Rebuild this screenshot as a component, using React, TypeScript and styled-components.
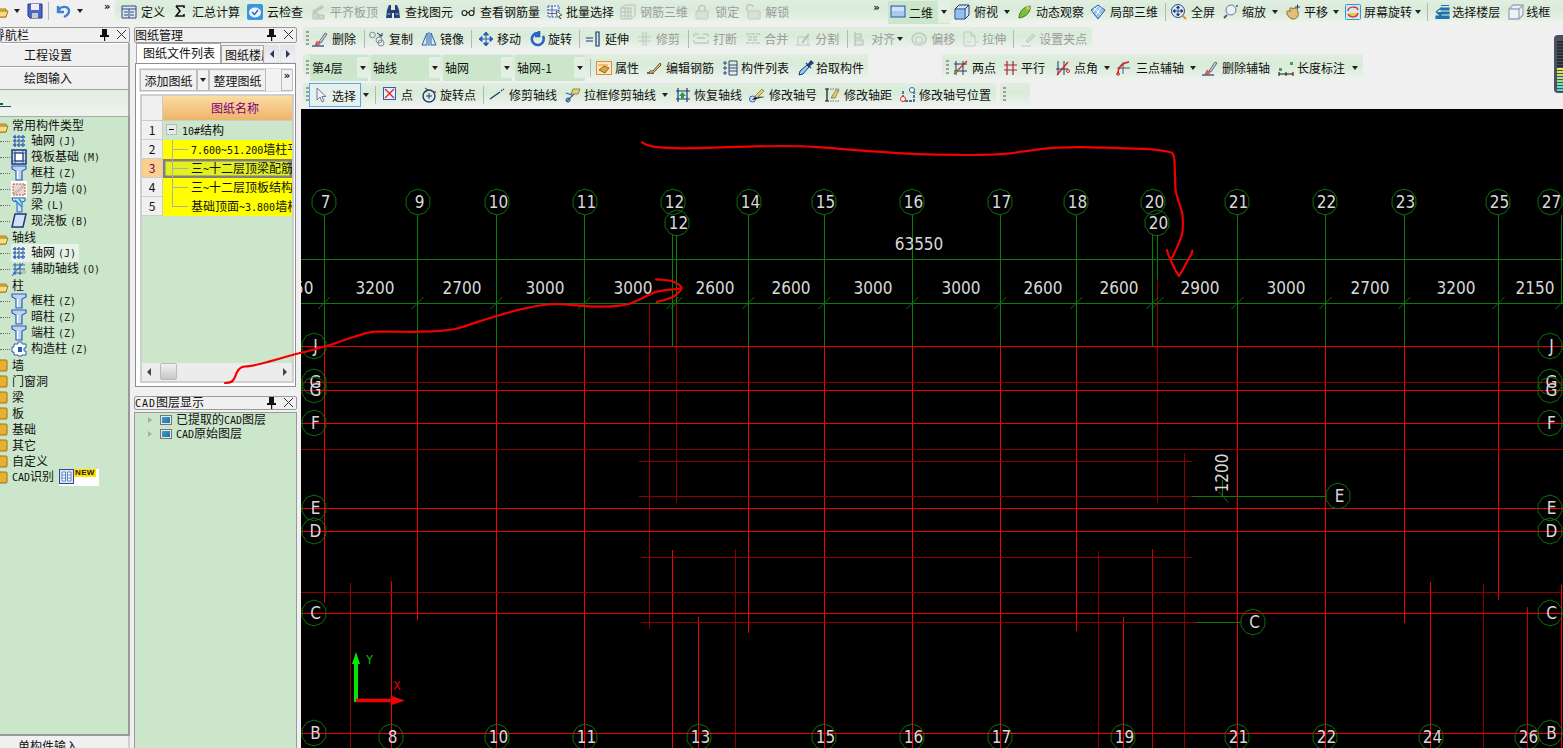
import React from 'react';
import styled, { createGlobalStyle, css } from 'styled-components';

const Global = createGlobalStyle`
  html, body { margin: 0; padding: 0; background: #f0f0f0; overflow: hidden; }
  body { font: 12px "Noto Sans CJK SC", "Liberation Sans", sans-serif; color: #111; }
`;
const Page = styled.div`position: relative; width: 1563px; height: 748px; overflow: hidden; background: #f0f0f0;`;
const band = css`background: linear-gradient(#e0eee0, #d9ebd9 40%, #eff3ef);`;

/* ---------- toolbars ---------- */
const TopRow = styled.div`display: flex; height: 24px;`;
const LeftTools = styled.div`display: flex; align-items: center; width: 115px; height: 22px; overflow: visible; flex: none;`;
const Band = styled.div<{ $w?: number; $ml?: number; $grow?: boolean }>`
  ${band}
  display: flex; align-items: center; flex: ${p => (p.$grow ? '1' : 'none')};
  width: ${p => (p.$w ? `${p.$w}px` : 'auto')};
  margin-left: ${p => p.$ml ?? 0}px; border-radius: 2px; white-space: nowrap;
`;
const ToolEl = styled.div<{ $ml: number; $off?: boolean; $g: number }>`
  display: flex; align-items: center; gap: ${p => p.$g}px; margin-left: ${p => p.$ml}px; flex: none;
  color: ${p => (p.$off ? '#9b9b9b' : '#111')}; line-height: 16px;
  ${p => p.$off && 'svg { opacity: .55; filter: grayscale(1); }'}
`;
const Sel2D = styled.div`display: flex; align-items: center; gap: 4px; height: 23px; margin-left: 3px; padding: 0 5px 0 3px; background: #cbe6cb;`;
const CaretBox = styled.div`display: flex; align-items: center; justify-content: center; width: 12px; height: 23px; background: #e3f0e3; border-bottom: 1px solid #cfe3cf;`;
const SelBox = styled.div`display: flex; align-items: center; gap: 6px; height: 22px; box-sizing: content-box; padding: 0 0 0 6px; width: 44px; border: 1px solid #58a7e6; background: #e6f1ee;`;
const Caret = styled.i<{ $ml?: number }>`
  display: block; flex: none; width: 0; height: 0; margin-left: ${p => p.$ml ?? 0}px;
  border-left: 3.5px solid transparent; border-right: 3.5px solid transparent; border-top: 4px solid #222;
`;
const Sep = styled.i<{ $ml: number }>`display: block; flex: none; width: 1px; height: 18px; background: #b4b8b4; margin-left: ${p => p.$ml}px;`;
const Dots = styled.i<{ $ml: number }>`display: block; flex: none; width: 3px; height: 16px; margin-left: ${p => p.$ml}px;
  background: repeating-linear-gradient(#9aa09a 0 2px, transparent 2px 4px);`;
const More = styled.b<{ $ml?: number }>`display: block; flex: none; font: bold 10px/10px "DejaVu Sans", sans-serif; margin: -8px 0 0 ${p => p.$ml ?? 0}px; color: #111;`;
const Combo = styled.div<{ $w: number; $ml: number }>`
  display: flex; align-items: center; justify-content: space-between; box-sizing: border-box; flex: none;
  width: ${p => p.$w}px; height: 26px; margin-left: ${p => p.$ml}px; padding-left: 2px; background: #cbe6cb;
`;
const ComboArrow = styled.div`display: flex; align-items: center; justify-content: center; width: 11px; height: 21px; background: #e2efe2;`;

const Main = styled.div`display: flex; height: 724px; padding-top: 3px;`;
const Workspace = styled.div`flex: none; width: 1262px; margin-left: 4px; display: flex; flex-direction: column;`;
const ToolRow = styled.div<{ $h: number; $mb: number }>`display: flex; height: ${p => p.$h}px; margin: 0 0 ${p => p.$mb}px 2px;`;
const Canvas = styled.svg`display: block; width: 1262px; height: 639px; background: #000; flex: none;
  text { font-family: "DejaVu Sans Condensed", "DejaVu Sans", sans-serif; fill: #d8d8d8; }
  line { shape-rendering: crispEdges; }`;
const Overlay = styled.svg`position: absolute; left: 0; top: 0; width: 1563px; height: 748px; pointer-events: none;`;
const Meter = styled.div`
  position: absolute; top: 35px; right: 0; width: 9px; height: 58px; box-sizing: border-box; padding: 6px 0 0 3px;
  border-radius: 4px 0 0 4px; background: #4b515f; display: flex; flex-direction: column; gap: 1px;
`;
const MeterTick = styled.i<{ $c: string }>`display: block; height: 2px; width: 6px; background: ${p => p.$c};`;

/* ---------- panels ---------- */
const Nav = styled.div`flex: none; width: 130px; display: flex; flex-direction: column;`;
const Side = styled.div`flex: none; width: 163px; margin-left: 4px; display: flex; flex-direction: column;`;
const TitleBar = styled.div`
  display: flex; align-items: center; height: 14px; box-sizing: content-box; flex: none;
  border: 1px solid #9a9a9a; border-radius: 2px; background: #f0f0f0; overflow: hidden; white-space: nowrap; line-height: 14px;
`;
const TitleText = styled.span<{ $ml?: number }>`flex: 1; margin-left: ${p => p.$ml ?? 0}px;`;
const PinBox = styled.span`display: flex; align-items: center; justify-content: center; width: 17px; height: 14px;`;
const NavBtn = styled.div<{ $h: number }>`
  height: ${p => p.$h}px; line-height: ${p => p.$h}px; text-align: center; border-bottom: 1px solid #a0a0a0; border-right: 2px solid #a8a8a8; flex: none;
  background: #f0f0f0; padding-right: 32px; box-shadow: inset 0 1px #fff;
`;
const NavStrip = styled.div`height: 26px; flex: none; background: linear-gradient(#e2efe2, #eef2ee); display: flex; align-items: flex-end; padding-bottom: 7px; box-sizing: border-box; border-right: 2px solid #a8a8a8;`;
const Tree = styled.div`
  flex: none; height: 620px; box-sizing: border-box; background: #cce6cc;
  border-right: 2px solid #9a9a9a; border-bottom: 2px solid #9a9a9a; border-top: 1px solid #9fb09f;
  overflow: hidden;
`;
const Row = styled.div`display: flex; align-items: center; height: 16px; white-space: nowrap; line-height: 16px;`;
const Conn = styled.i`display: block; flex: none; width: 10px; margin-right: 1px; border-top: 1px dotted #6b6b6b;`;
const Child = styled.div<{ $on?: boolean }>`
  display: flex; align-items: center; gap: 5px; padding-right: 3px; border-radius: 2px;
  background: ${p => (p.$on ? '#e6f2e6' : 'transparent')};
`;
const Folder = styled.span`display: block; width: 16px; height: 14px; margin: 0 4px 0 -8px; flex: none;`;
const Hot = styled.span`font: 10px/16px "DejaVu Sans Mono", monospace; margin-left: 3px; color: #222;`;
const Mono = styled.span`font: 10px/16px "DejaVu Sans Mono", monospace;`;
const TitleMono = styled.span`font: 10px/12px "DejaVu Sans Mono", monospace; letter-spacing: 1px;`;
const NewBox = styled.span`display: flex; align-items: flex-start; width: 40px; height: 17px; margin-left: 5px; background: #fff;`;
const NewTag = styled.b`font: bold 8px/8px "Liberation Sans", sans-serif; background: #ffe000; padding: 0 1px; color: #222; letter-spacing: .3px;`;
const NavFoot = styled.div`flex: 1; background: #f0f0f0; padding: 2px 0 0 18px; line-height: 16px; border-right: 2px solid #d0d0d0;`;

const Tabs = styled.div`display: flex; align-items: flex-end; height: 20px; flex: none;`;
const Tab = styled.div<{ $on?: boolean; $w: number }>`
  width: ${p => p.$w}px; box-sizing: border-box; height: ${p => (p.$on ? 20 : 18)}px; line-height: 18px; overflow: hidden; white-space: nowrap;
  margin-left: ${p => (p.$on ? 2 : 0)}px; padding-left: ${p => (p.$on ? 6 : 3)}px; background: ${p => (p.$on ? '#fff' : '#f0f0f0')};
  border: 1px solid #a8a8a8; border-bottom: 0; flex: none;
`;
const TabArrow = styled.div<{ $ml: number }>`
  display: flex; align-items: center; justify-content: center; width: 15px; height: 18px; flex: none; margin-left: ${p => p.$ml}px;
  background: linear-gradient(#dfe3ee, #f2f2f6); border: 1px solid #e4e4e4; box-sizing: border-box;
`;
const Frame = styled.div`flex: none; height: 324px; box-sizing: border-box; margin: 0 1px 0 1px; border: 1px solid #8e8e8e; background: #fff; padding: 4px 3px 3px 3px;`;
const FrameBar = styled.div`display: flex; height: 24px; background: #f2f2f2; border: 1px solid #ddd; box-sizing: border-box;`;
const FrameBtn = styled.div<{ $w: number; $ml?: number }>`
  flex: none; width: ${p => p.$w}px; margin-left: ${p => p.$ml ?? 0}px; box-sizing: border-box; height: 22px; line-height: 21px;
  text-align: center; border: 1px solid #bdbdbd; background: #f1f1f1;
  display: flex; align-items: center; justify-content: center;
`;
const GridBox = styled.div`margin: 2px 0 0 1px; height: 289px; border: 2px solid #cfcfcf; background: #cce6cc; display: flex; flex-direction: column; box-sizing: border-box; overflow: hidden; width: 154px;`;
const GridRow = styled.div<{ $h: number }>`display: flex; height: ${p => p.$h}px; flex: none;`;
const NumCell = styled.div<{ $on?: boolean }>`
  flex: none; width: 21px; box-sizing: border-box; text-align: center; line-height: 18px;
  border-right: 1px solid #ccc; border-bottom: 1px solid #ccc;
  background: ${p => (p.$on ? '#fbd08c' : '#f0f0f0')}; color: ${p => (p.$on ? '#700070' : '#111')};
`;
const HeadCell = styled.div`flex: 1; text-align: center; padding-left: 15px; line-height: 24px; color: #800080; background: linear-gradient(#fbdca4, #efb468); border-bottom: 1px solid #ccc;`;
const NameCell = styled.div<{ $bg: string; $on?: boolean }>`
  position: relative; flex: 1; min-width: 0; overflow: hidden; white-space: nowrap; line-height: 17px;
  padding-left: ${p => (p.$bg === 'none' ? 19 : 28)}px; background: ${p => (p.$bg === 'none' ? 'transparent' : p.$bg)};
  ${p => p.$on && 'box-shadow: inset 0 0 0 2.5px #808080;'}
`;
const Branch = styled.i<{ $last?: boolean }>`
  position: absolute; left: 9px; top: 0; width: 16px; height: ${p => (p.$last ? 10 : 19)}px; box-sizing: border-box;
  border-left: 1px solid #b0b0a0; background: linear-gradient(#b0b0a0, #b0b0a0) no-repeat 0 9px / 100% 1px;
`;
const Minus = styled.i`
  position: absolute; left: 3px; top: 3px; width: 11px; height: 11px; box-sizing: border-box; background: #e8e8e8; border: 1px solid #bbb;
  &::after { content: ''; position: absolute; left: 2px; top: 4px; width: 5px; height: 1px; background: #111; }
`;
const GridFill = styled.div`flex: 1;`;
const HScroll = styled.div`height: 18px; flex: none; background: #ececec; display: flex; align-items: center; justify-content: space-between; padding: 0 5px; box-sizing: border-box; position: relative;`;
const Thumb = styled.i`position: absolute; left: 18px; top: 0; width: 15px; height: 15px; border: 1px solid #bbb; border-radius: 2px; background: linear-gradient(#f2f2f2, #c6c6c6);`;
const Tri = styled.i<{ $dir: 'l' | 'r'; $c?: string }>`
  display: block; width: 0; height: 0; border-top: 4px solid transparent; border-bottom: 4px solid transparent;
  ${p => (p.$dir === 'l' ? `border-right: 4px solid ${p.$c ?? '#444'};` : `border-left: 4px solid ${p.$c ?? '#444'};`)}
`;
const CadTitle = styled(TitleBar)`margin-top: 9px; height: 12px; line-height: 12px;`;
const CadTree = styled.div`flex: 1; margin-top: 2px; background: #cce6cc; border: 1px solid #9a9a9a; border-bottom: 0;`;
const CadRow = styled.div`display: flex; align-items: center; height: 14px; padding-left: 13px; white-space: nowrap; line-height: 14px;`;
const CadTri = styled.i`display: block; width: 0; height: 0; border-top: 3px solid transparent; border-bottom: 3px solid transparent; border-left: 4px solid #aaa; margin-right: 8px;`;
const LayerIcon = styled.i`display: block; width: 12px; height: 10px; box-sizing: border-box; border: 1px solid #777; background: linear-gradient(135deg, #4aa3d8, #1b6a98); box-shadow: inset 0 0 0 1px #dfeaf0; margin-right: 4px;`;

/* ---------- icons ---------- */
const B = '#2a5fb4', D = '#1d3a70', R = '#d22', O = '#e0902a';
const grid = <path d="M2 4H14M2 8H14M2 12H14M4 2V14M8 2V14M12 2V14" stroke={B} fill="none" strokeWidth="1.3" strokeDasharray="3 .6" />;
const column = <><path d="M1 1H15V4L11 6V15H5V6L1 4Z" fill="#bcd4f2" stroke={B} strokeWidth="1.2" /><path d="M6.5 6V14" stroke="#fff" strokeWidth="1.4" /></>;
const brush = <><path d="M7 11L13 2L15 3L9 12Z" fill="#c5c8d8" stroke="#445" strokeWidth=".7" /><path d="M5 10L8 12L7 14L3 14Z" fill="#e86a50" stroke="#a33" strokeWidth=".5" /><path d="M0 15H12" stroke={D} strokeWidth="1.2" /></>;
const icons: Record<string, React.ReactNode> = {
  openfolder: <><path d="M1 4H6L7 6H14V14H1Z" fill="#f0c850" stroke="#a07818" /><path d="M3 8H16L14 14H1Z" fill="#f8dd80" stroke="#a07818" /></>,
  save: <><path d="M1 1H15V15H3L1 13Z" fill="#4a68c8" stroke="#22357a" /><path d="M4 1H12V7H4Z" fill="#eef" /><path d="M5 10H11V15H5Z" fill="#c8c8d0" /></>,
  undo: <path d="M3 8C3 3 13 2 13 8C13 11 10 13 8 14M2 3V9H8" fill="none" stroke="#3f7fd6" strokeWidth="2.4" />,
  define: <><path d="M1 2H15V14H1Z" fill="#dfe8f4" stroke="#2b4a78" /><path d="M1 5H15M3 8H7M3 11H7M9 8H13M9 11H13M8 5V14" stroke="#2b4a78" /></>,
  sigma: <path d="M2 2H10V4M2 2L6 7L2 12H10V10" fill="none" stroke="#111" strokeWidth="1.6" />,
  cloud: <><rect x="0" y="0" width="16" height="16" rx="2" fill="#3a96dc" /><ellipse cx="8" cy="8.5" rx="6" ry="5" fill="#eaf4ff" /><path d="M5 8L7.5 10.5L11 6" stroke={B} fill="none" strokeWidth="1.4" /></>,
  flat: <><path d="M2 7L12 1L14 4L4 9Z" fill="#aaa" /><path d="M3 9H8V15H3ZM9 11H14V15H9Z" fill="#c4c4c4" stroke="#999" /></>,
  binoc: <><path d="M2 6L4 1H6V6H10V1H12L14 6L15 14H9V9H7V14H1Z" fill="#25407a" /><path d="M2.5 10H5.5M10.5 10H13.5" stroke="#9cc" /></>,
  glasses: <><circle cx="3.5" cy="9" r="2.5" fill="none" stroke="#222" strokeWidth="1.2" /><circle cx="10.5" cy="9" r="2.5" fill="none" stroke="#222" strokeWidth="1.2" /><path d="M6 8.5H8M13 8L13 3" stroke="#222" /></>,
  batch: <><path d="M1 2H12V13H1Z" fill="#eef3fb" stroke={B} strokeDasharray="2 1" /><path d="M1 6H12M1 9.5H12M5 2V13" stroke={D} strokeWidth=".7" /><path d="M9 7L15 11L12 12L14 15L10 12Z" fill="#fff" stroke="#222" strokeWidth=".7" /></>,
  rebar3d: <path d="M1 4H11V15H1ZM1 4L5 1H15V12L11 15M1 8H11M1 12H11M5 4V15M8 4V15" fill="none" stroke="#999" />,
  lock: <><path d="M4 7V4C4 0.5 10 0.5 10 4V7" fill="none" stroke="#aaa" strokeWidth="1.5" /><rect x="1" y="7" width="12" height="8" rx="1" fill="#d5d5d5" stroke="#aaa" /></>,
  unlock: <><path d="M2 7V3C2 0 8 0 8 3" fill="none" stroke="#aaa" strokeWidth="1.5" /><rect x="3" y="7" width="12" height="8" rx="1" fill="#d5d5d5" stroke="#aaa" /></>,
  view2d: <><rect x="0" y="2" width="14" height="11" fill="#a9c8f0" stroke="#2d5aa8" /><rect x="1" y="3" width="12" height="4" fill="#cfe2fa" /></>,
  top: <><path d="M1 5L5 1H15V11L11 15H1Z" fill="#cfe6f8" stroke={D} /><path d="M1 5H11V15M11 5L15 1" fill="none" stroke={D} /><path d="M2 6H10V14H2Z" fill="#8fc3ee" /></>,
  orbit: <><path d="M2 14C2 8 6 3 13 2C14 7 10 13 2 14Z" fill="#7cc040" stroke="#3c7a20" /><circle cx="11" cy="4" r="2" fill="#e8c040" /></>,
  local3d: <><path d="M1 6L8 1L15 6L8 15Z" fill="#9cc4ea" stroke={B} /><path d="M4 4L11 11M8 2L3 8M11 3L6 11" stroke="#fff" /></>,
  full: <><circle cx="7" cy="7" r="6.5" fill="#dbe6f8" stroke="#2b4a88" /><path d="M7 2V12M2 7H12M7 2L5.5 4H8.5ZM7 12L5.5 10H8.5ZM2 7L4 5.5V8.5ZM12 7L10 5.5V8.5Z" stroke={D} fill={D} strokeWidth=".8" /><path d="M11 11L15 15" stroke={O} strokeWidth="2" /></>,
  zoom: <><circle cx="8" cy="6" r="5" fill="#e8f0f8" stroke="#778" /><path d="M4 11L1 14" stroke="#556" strokeWidth="2" /><path d="M13 2H15M14 1V3" stroke={B} /></>,
  pan: <><path d="M2 10C1 6 4 6 5 8L5 5C5 3 7 3 7 5L9 4C11 4 13 6 13 8C14 12 12 15 8 15C5 15 4 13 2 10Z" fill="#e0c078" stroke="#8a6a28" /><path d="M10 3H15M12.5 0.500V5" stroke={D} /></>,
  rotate: <><rect x=".5" y=".5" width="15" height="15" rx="1" fill="#cfe9f8" stroke="#3a96c8" /><path d="M4 9H12V13H4Z" fill="#e8d040" /><path d="M3 7C3 2 12 2 13 6M13 9C12 14 5 14 3 10" fill="none" stroke="#e03a2a" strokeWidth="1.5" /></>,
  floors: <path d="M2 8L7 4V6H15V4H7M2 8L7 12V10H15V8H7M2 12H15V14.500H2ZM7 1.500H15" fill="#1e72b0" stroke="#1e72b0" strokeWidth="1.2" />,
  wire: <path d="M1 5H11V15H1ZM1 5L5 1H15V11L11 15M11 5L15 1" fill="#eef2f8" stroke="#9aa8b8" strokeWidth="1.3" />,
  brush,
  copy: <><circle cx="3.5" cy="4" r="2.800" fill="none" stroke="#889" /><circle cx="10" cy="9" r="3" fill="none" stroke="#889" /><circle cx="12" cy="12" r="3" fill="none" stroke="#889" /><path d="M8 2L13 5M13 2V5H10" stroke={D} fill="none" /></>,
  mirror: <path d="M6 2L1 14H6ZM10 2L15 14H10ZM8 1V15" fill="#dce8f8" stroke={B} />,
  move: <path d="M8 1V15M1 8H15M8 1L5.500 4H10.500ZM8 15L5.500 12H10.500ZM1 8L4 5.500V10.500ZM15 8L12 5.500V10.500Z" fill={B} stroke={B} />,
  spin: <path d="M8 2A6 6 0 1 0 13 5M9 0V5H5" fill="none" stroke="#2a62c4" strokeWidth="2.6" />,
  extend: <path d="M1 7H8M1 10H8M11 1H14V15H11Z" fill="none" stroke={D} strokeWidth="1.2" />,
  trim: <path d="M1 6H14M1 10H14M6 1V15M9 1V15" fill="none" stroke="#aaa" strokeWidth="1.200" />,
  breakk: <path d="M1 3H6M10 3H15M1 12H15V9M1 12V9M1 3V6M15 3V6M4 7H12" fill="none" stroke="#aaa" strokeWidth="1.300" />,
  merge: <path d="M1 3H15M1 12H15M3 6H13M3 9H13" fill="none" stroke="#aaa" strokeWidth="1.300" strokeDasharray="4 1" />,
  split: <><path d="M1 14H15M3 6H13V14M3 6V14" fill="none" stroke="#aaa" /><path d="M7 12L14 3" stroke="#999" strokeWidth="2" /></>,
  align: <path d="M2 1V15M2 3H8V7H2ZM2 9H10V14H2Z" fill="#d8d8d8" stroke="#999" strokeWidth="1.200" />,
  offset: <><ellipse cx="8" cy="8" rx="7" ry="6" fill="none" stroke="#aaa" strokeWidth="1.500" /><ellipse cx="8" cy="9" rx="3.500" ry="3" fill="none" stroke="#aaa" strokeWidth="1.200" /></>,
  stretch: <path d="M1 1H8L12 5V15H1ZM8 1V5H12M13 11H16M4 11H8" fill="none" stroke="#aaa" />,
  grip: <><path d="M1 15H11" stroke="#aaa" /><path d="M6 10L13 3L15 5L8 12Z" fill="#ccc" stroke="#aaa" /></>,
  prop: <><rect x=".5" y="1.500" width="15" height="13" fill="#fbe7c4" stroke={O} /><path d="M3 10L8 6L13 8L9 13Z" fill="#d8a840" stroke="#8a6a18" /><path d="M2 5H12" stroke={O} /></>,
  editbar: <><path d="M1 13H8" stroke="#111" strokeWidth="1.200" /><path d="M3 13C4 10 5 11 7 11L14 3L15 5L8 12" fill="#f0c860" stroke="#443" strokeWidth=".9" /></>,
  list: <path d="M1 2H3V4H1ZM1 7H3V9H1ZM1 12H3V14H1ZM6 1H14V15H6ZM6 5H14M6 8H14M6 11H14" fill="none" stroke={D} strokeWidth=".9" />,
  pick: <><path d="M1 15L2 11L9 5L11 7L5 14Z" fill="#8ecbff" stroke={D} /><path d="M8 3L13 8M10 5L13 1L15 3L11 6" fill={B} stroke={D} strokeWidth="1.300" /></>,
  twopt: <><path d="M3 1V15M10 1V15M1 4H14M1 11H14" stroke={D} strokeWidth="1" fill="none" /><path d="M1 14L14 1" stroke={R} strokeWidth="1.200" /><circle cx="3" cy="12" r="1.500" fill="#3aaa3a" /></>,
  parallel: <path d="M4 1V15M10 1V15M1 5H14M1 10H14" stroke="#b02038" strokeWidth="1.200" fill="none" />,
  angle: <><path d="M3 1V15M9 1V15M1 9H13" stroke={D} fill="none" /><path d="M2 15L13 2" stroke={R} strokeWidth="1.400" /><circle cx="13" cy="11" r="1.500" fill="none" stroke={R} /></>,
  arc3: <><path d="M2 14C2 7 6 3 13 2M1 8H14M7 2V14" fill="none" stroke={D} strokeWidth=".8" /><path d="M2 14C2 7 6 3 13 2" fill="none" stroke={R} strokeWidth="1.400" /><circle cx="2" cy="14" r="1.400" fill="none" stroke={R} /></>,
  dim: <><rect x="1" y="8" width="3" height="3" fill="#3aaa3a" /><rect x="12" y="2" width="3" height="3" fill="#3aaa3a" /><path d="M1 12V16M8 12V16M15 12V16M1 14H15" stroke="#111" /></>,
  cursor: <path d="M1 1V13L4 10L6 15L8 14L6 9.500H10Z" fill="#eef" stroke="#778" />,
  point: <><rect x=".5" y=".5" width="12" height="12" fill="#e8f0ff" stroke={B} /><path d="M2 2L11 11M11 2L2 11" stroke={R} strokeWidth="1.300" /></>,
  spinpt: <><circle cx="8" cy="9" r="6" fill="none" stroke={D} strokeWidth="1.400" /><path d="M5 9H11M8 6V12" stroke={D} /><path d="M4 1L7 3L4 5" fill="none" stroke={D} /><circle cx="14" cy="5" r="1" fill={R} /></>,
  trimaxis: <><path d="M0 12L10 5" stroke={D} strokeWidth="1.400" /><path d="M11 4L14 2" stroke={D} strokeDasharray="1.500 1" strokeWidth="1.400" /></>,
  frame: <><path d="M2 14L13 3M1 6L7 8" stroke={B} strokeWidth="1.300" /><path d="M8 2L15 2L13 7L6 7Z" fill="#f0cc60" stroke="#886" /><circle cx="3" cy="13" r="2" fill="none" stroke={D} /></>,
  restore: <><path d="M3 1V15M12 1V15M1 4H15M1 12H15" stroke={D} strokeWidth="1.200" /><path d="M7.500 5L11 9H9V12H6V9H4Z" fill="#2a9a50" /></>,
  axno: <><circle cx="3.500" cy="12" r="3" fill="#cfe0f8" stroke={B} /><path d="M3 13L6 10H15" stroke="#778" /><path d="M6 9L13 2L15 4L8 11Z" fill="#f0cc60" stroke="#664" strokeWidth=".7" /></>,
  axdist: <><path d="M1 2H5M3 2V14M1 14H5" stroke="#111" strokeWidth="1.200" /><path d="M7 11L12 3H15L11 11Z" fill="#f0cc60" stroke="#664" strokeWidth=".7" /><path d="M6 14H15" stroke="#777" strokeDasharray="1.500 1" /><path d="M6 2H15" stroke="#777" strokeDasharray="1.500 1" /></>,
  axpos: <><path d="M3 4V14H14V4" fill="none" stroke={D} strokeWidth="1.300" strokeDasharray="3 1" /><circle cx="3" cy="12" r="2.500" fill="#fff" stroke={R} /><circle cx="12" cy="3" r="2.500" fill="#fff" stroke={B} /></>,
  grid,
  raft: <><rect x="1" y="1" width="14" height="14" fill="#cfe0f8" stroke={D} strokeWidth="1.500" /><rect x="4" y="4" width="8" height="8" fill="#fff" stroke={D} /><path d="M1 4H15M1 12H15M4 1V15M12 1V15" stroke={D} strokeWidth=".6" /></>,
  column,
  wall: <><rect x="0" y="0" width="16" height="16" fill="#fff" /><rect x="2" y="3" width="12" height="11" fill="#e8d8d0" stroke="#c05030" strokeDasharray="2 1" /><path d="M3 13L13 5" stroke="#b0a8a0" strokeWidth="3" strokeDasharray="1 1" /></>,
  beam: <><path d="M1 1H14V4L11 5V15H6V5L2 4Z" fill="#c8e4f8" stroke={B} /><path d="M4 3L11 10M8 2L11 6" stroke="#2a90d0" strokeWidth="1.600" /></>,
  slab: <path d="M4 1H15L12 14H1Z" fill="#cfe2fa" stroke={D} strokeWidth="1.500" />,
  auxgrid: <><path d="M2 4H14M2 8H14M2 12H14M4 2V14M9 2V14" stroke={B} strokeWidth="1" fill="none" /><path d="M1 15L12 2" stroke={B} /><path d="M11 9H15V13H11Z" fill="#b8c8a0" /></>,
  struct: <><path d="M3 3H7V1H11V3H15V7H13V10H15V14H11V15H7V14H3V11H1V6H3Z" fill="#fff" stroke={B} /><path d="M7 6H11V11H7Z" fill={B} /></>,
  pin: <path d="M5 2H10V8H12V10H8.200V14H7V10H3V8H5Z" fill="#111" />,
  close: <path d="M3 3L12 12M12 3L3 12" stroke="#333" strokeWidth="1" />,
  cols: <><rect x=".5" y=".5" width="14" height="14" fill="#dce8f8" stroke="#2b4a88" /><path d="M3 3H6.500V12H3ZM8.500 3H12V12H8.500ZM3 6H6.500M3 9H6.500M8.500 6H12M8.500 9H12" fill="#fff" stroke={B} strokeWidth=".7" /></>,
  closed: <rect x="0" y="2" width="15" height="11" rx="1" fill="#e8b030" stroke="#a07010" />,
};
const Svg = styled.svg<{ $w: number }>`display: block; flex: none; width: ${p => p.$w}px; height: 16px; overflow: visible;`;
const MiniSvg = styled.svg`display: block; width: 12px; height: 6px;`;
const Icon = ({ n, w = 16 }: { n: string; w?: number }) => <Svg $w={w} viewBox={`0 0 ${w} 16`}>{icons[n]}</Svg>;

type T = { n: string; t: string; ml: number; w?: number; g?: number; off?: boolean };
const Tool = ({ n, t, ml, w = 16, g = 4, off }: T) => (
  <ToolEl $ml={ml} $g={g} $off={off}><Icon n={n} w={w} /><span>{t}</span></ToolEl>
);

const Toolbars = () => (
  <TopRow>
    <LeftTools>
      <ToolEl $ml={-8} $g={0}><Icon n="openfolder" /></ToolEl>
      <Caret $ml={6} />
      <ToolEl $ml={7} $g={0}><Icon n="save" w={14} /></ToolEl>
      <Sep $ml={7} />
      <ToolEl $ml={7} $g={0}><Icon n="undo" w={14} /></ToolEl>
      <Caret $ml={7} />
      <More $ml={21}>»</More>
    </LeftTools>
    <Band $w={770}>
      <Tool n="define" t="定义" ml={6} />
      <Tool n="sigma" t="汇总计算" ml={9} w={12} g={6} />
      <Tool n="cloud" t="云检查" ml={7} />
      <Tool n="flat" t="平齐板顶" ml={7} off />
      <Tool n="binoc" t="查找图元" ml={7} />
      <Tool n="glasses" t="查看钢筋量" ml={8} w={14} g={5} />
      <Tool n="batch" t="批量选择" ml={7} g={3} />
      <Tool n="rebar3d" t="钢筋三维" ml={6} off />
      <Tool n="lock" t="锁定" ml={7} w={14} g={6} off />
      <Tool n="unlock" t="解锁" ml={6} off />
      <More $ml={84}>»</More>
    </Band>
    <Band $grow>
      <Sel2D><Icon n="view2d" w={14} /><span>二维</span></Sel2D>
      <CaretBox><Caret /></CaretBox>
      <Tool n="top" t="俯视" ml={4} />
      <Caret $ml={6} />
      <Tool n="orbit" t="动态观察" ml={7} w={14} g={5} />
      <Tool n="local3d" t="局部三维" ml={6} />
      <Sep $ml={7} />
      <Tool n="full" t="全屏" ml={5} />
      <Tool n="zoom" t="缩放" ml={8} g={3} />
      <Caret $ml={6} />
      <Tool n="pan" t="平移" ml={7} g={3} />
      <Caret $ml={5} />
      <Tool n="rotate" t="屏幕旋转" ml={6} g={3} />
      <Caret $ml={3} />
      <Sep $ml={6} />
      <Tool n="floors" t="选择楼层" ml={6} g={2} />
      <Tool n="wire" t="线框" ml={8} w={14} />
    </Band>
  </TopRow>
);

const WorkTools = () => (
  <>
    <ToolRow $h={23} $mb={4}>
      <Band $w={789}>
        <Dots $ml={3} />
        <Tool n="brush" t="删除" ml={3} w={17} g={3} />
        <Sep $ml={8} />
        <Tool n="copy" t="复制" ml={4} />
        <Tool n="mirror" t="镜像" ml={8} g={3} />
        <Sep $ml={7} />
        <Tool n="move" t="移动" ml={6} w={14} g={5} />
        <Tool n="spin" t="旋转" ml={9} w={14} />
        <Sep $ml={7} />
        <Tool n="extend" t="延伸" ml={5} w={15} g={5} />
        <Tool n="trim" t="修剪" ml={8} w={14} g={5} off />
        <Sep $ml={8} />
        <Tool n="breakk" t="打断" ml={4} w={15} g={5} off />
        <Tool n="merge" t="合并" ml={8} w={15} off />
        <Tool n="split" t="分割" ml={7} off />
        <Sep $ml={8} />
        <Tool n="align" t="对齐" ml={5} w={10} g={8} off />
        <Caret $ml={2} />
        <Tool n="offset" t="偏移" ml={8} w={14} g={6} off />
        <Tool n="stretch" t="拉伸" ml={8} w={14} g={5} off />
        <Sep $ml={7} />
        <Tool n="grip" t="设置夹点" ml={6} g={3} off />
      </Band>
    </ToolRow>
    <ToolRow $h={27} $mb={2}>
      <Band $w={565}>
        <Dots $ml={3} />
        <Combo $w={58} $ml={1}><span>第4层</span><ComboArrow><Caret /></ComboArrow></Combo>
        <Combo $w={69} $ml={3}><span>轴线</span><ComboArrow><Caret /></ComboArrow></Combo>
        <Combo $w={69} $ml={3}><span>轴网</span><ComboArrow><Caret /></ComboArrow></Combo>
        <Combo $w={70} $ml={3}><span>轴网-1</span><ComboArrow><Caret /></ComboArrow></Combo>
        <Sep $ml={5} />
        <Tool n="prop" t="属性" ml={5} w={15} />
        <Tool n="editbar" t="编辑钢筋" ml={7} w={15} g={5} />
        <Tool n="list" t="构件列表" ml={9} w={14} />
        <Tool n="pick" t="拾取构件" ml={9} w={14} />
      </Band>
      <Band $w={421} $ml={74}>
        <Dots $ml={4} />
        <Tool n="twopt" t="两点" ml={4} w={14} g={5} />
        <Tool n="parallel" t="平行" ml={7} w={14} />
        <Tool n="angle" t="点角" ml={10} w={14} g={5} />
        <Caret $ml={6} />
        <Tool n="arc3" t="三点辅轴" ml={6} w={15} g={5} />
        <Caret $ml={6} />
        <Tool n="brush" t="删除辅轴" ml={6} />
        <Tool n="dim" t="长度标注" ml={8} w={15} />
        <Caret $ml={7} />
      </Band>
    </ToolRow>
    <ToolRow $h={24} $mb={2}>
      <Band $w={693}>
        <Dots $ml={3} />
        <SelBox><Icon n="cursor" w={10} /><span>选择</span></SelBox>
        <Caret $ml={2} />
        <Sep $ml={6} />
        <Tool n="point" t="点" ml={7} w={13} g={5} />
        <Tool n="spinpt" t="旋转点" ml={8} w={15} />
        <Sep $ml={7} />
        <Tool n="trimaxis" t="修剪轴线" ml={6} w={14} g={5} />
        <Tool n="frame" t="拉框修剪轴线" ml={8} w={15} />
        <Caret $ml={6} />
        <Tool n="restore" t="恢复轴线" ml={7} w={14} g={5} />
        <Tool n="axno" t="修改轴号" ml={7} w={15} g={5} />
        <Tool n="axdist" t="修改轴距" ml={7} w={15} g={5} />
        <Tool n="axpos" t="修改轴号位置" ml={8} w={15} />
      </Band>
      <Band $w={30} $ml={4}><Dots $ml={3} /></Band>
    </ToolRow>
  </>
);

/* ---------- navigation data ---------- */
type N = { g?: string; c?: string; k?: string; i?: string; on?: boolean; open?: boolean };
const tree: N[] = [
  { g: '常用构件类型', open: true },
  { c: '轴网', k: 'J', i: 'grid' }, { c: '筏板基础', k: 'M', i: 'raft' }, { c: '框柱', k: 'Z', i: 'column' },
  { c: '剪力墙', k: 'Q', i: 'wall' }, { c: '梁', k: 'L', i: 'beam' }, { c: '现浇板', k: 'B', i: 'slab' },
  { g: '轴线', open: true },
  { c: '轴网', k: 'J', i: 'grid', on: true }, { c: '辅助轴线', k: 'O', i: 'auxgrid' },
  { g: '柱', open: true },
  { c: '框柱', k: 'Z', i: 'column' }, { c: '暗柱', k: 'Z', i: 'column' }, { c: '端柱', k: 'Z', i: 'column' }, { c: '构造柱', k: 'Z', i: 'struct' },
  { g: '墙' }, { g: '门窗洞' }, { g: '梁' }, { g: '板' }, { g: '基础' }, { g: '其它' }, { g: '自定义' },
];

const NavPanel = () => (
  <Nav>
    <TitleBar>
      <TitleText $ml={-32}>模块导航栏</TitleText>
      <PinBox><Icon n="pin" w={14} /></PinBox>
      <PinBox><Icon n="close" w={14} /></PinBox>
    </TitleBar>
    <NavBtn $h={23}>工程设置</NavBtn>
    <NavBtn $h={22}>绘图输入</NavBtn>
    <NavStrip><MiniSvg viewBox="0 0 12 6"><path d="M0 0H3V2H0ZM0 3H11V4H0Z" fill="#0f5a5a" /></MiniSvg></NavStrip>
    <Tree>
      {tree.map((r, i) => r.g ? (
        <Row key={i}><Folder><Icon n={r.open ? 'openfolder' : 'closed'} /></Folder><span>{r.g}</span></Row>
      ) : (
        <Row key={i}>
          <Conn />
          <Child $on={r.on}><Icon n={r.i!} w={15} /><span>{r.c}<Hot>({r.k})</Hot></span></Child>
        </Row>
      ))}
      <Row>
        <Folder><Icon n="closed" /></Folder>
        <span><Mono>CAD</Mono>识别</span>
        <NewBox><Icon n="cols" w={15} /><NewTag>NEW</NewTag></NewBox>
      </Row>
    </Tree>
    <NavFoot>单构件输入</NavFoot>
  </Nav>
);

const rows: { t: React.ReactNode; on?: boolean; last?: boolean }[] = [
  { t: <><Mono>7.600~51.200</Mono>墙柱平法</> },
  { t: <>三<Mono>~</Mono>十二层顶梁配筋</>, on: true },
  { t: <>三<Mono>~</Mono>十二层顶板结构</> },
  { t: <>基础顶面<Mono>~3.800</Mono>墙柱</>, last: true },
];

const SidePanel = () => (
  <Side>
    <TitleBar>
      <TitleText>图纸管理</TitleText>
      <PinBox><Icon n="pin" w={14} /></PinBox>
      <PinBox><Icon n="close" w={14} /></PinBox>
    </TitleBar>
    <Tabs>
      <Tab $on $w={85}>图纸文件列表</Tab>
      <Tab $w={43}>图纸楼层</Tab>
      <TabArrow $ml={0}><Tri $dir="l" $c="#335" /></TabArrow>
      <TabArrow $ml={1}><Tri $dir="r" $c="#335" /></TabArrow>
    </Tabs>
    <Frame>
      <FrameBar>
        <FrameBtn $w={57}>添加图纸</FrameBtn>
        <FrameBtn $w={12}><Caret /></FrameBtn>
        <FrameBtn $w={57}>整理图纸</FrameBtn>
        <FrameBtn $w={12} $ml={15}><More>»</More></FrameBtn>
      </FrameBar>
      <GridBox>
        <GridRow $h={25}><NumCell /><HeadCell>图纸名称</HeadCell></GridRow>
        <GridRow $h={19}>
          <NumCell>1</NumCell>
          <NameCell $bg="none"><Minus /><Mono>10#</Mono>结构</NameCell>
        </GridRow>
        {rows.map((r, i) => (
          <GridRow $h={19} key={i}>
            <NumCell $on={r.on}>{i + 2}</NumCell>
            <NameCell $bg={r.on ? '#e2f020' : '#ffff00'} $on={r.on}><Branch $last={r.last} />{r.t}</NameCell>
          </GridRow>
        ))}
        <GridFill />
        <HScroll><Tri $dir="l" /><Thumb /><Tri $dir="r" /></HScroll>
      </GridBox>
    </Frame>
    <CadTitle>
      <TitleText><TitleMono>CAD</TitleMono>图层显示</TitleText>
      <PinBox><Icon n="pin" w={14} /></PinBox>
      <PinBox><Icon n="close" w={14} /></PinBox>
    </CadTitle>
    <CadTree>
      <CadRow><CadTri /><LayerIcon /><span>已提取的<Mono>CAD</Mono>图层</span></CadRow>
      <CadRow><CadTri /><LayerIcon /><span><Mono>CAD</Mono>原始图层</span></CadRow>
    </CadTree>
  </Side>
);

/* ---------- CAD drawing (page coordinates, viewBox offset) ---------- */
const GR = '#0c7d0c', RD = '#f00000', DR = '#8c0000';
type L = [number, number, number, number, string];
const V = (x: number, a: number, b: number, c: string): L => [x, a, x, b, c];
const H = (y: number, a: number, b: number, c: string): L => [a, y, b, y, c];
const W = 1563, BTM = 748;
const axes: [number, number][] = [[324, 603], [417.5, 620], [496.5, BTM], [584.5, BTM], [748.5, 633], [824.5, BTM], [912.5, BTM], [1000.5, BTM], [1076.5, 631], [1237.5, BTM], [1325.5, BTM], [1404.5, 623], [1498.5, 600]];
const lines: L[] = [
  H(259.5, 301, W, GR), H(303.5, 301, W, GR),
  ...axes.flatMap(([x, e]): L[] => [V(x, 215, 346, GR), V(x, 346, e, RD)]),
  V(672.5, 235, 346, GR), V(676.5, 235, 303, GR), V(676.5, 303, 503, DR),
  V(1152.5, 235, 346, GR), V(1157.5, 235, 280, GR), V(1157.5, 280, 503, DR),
  V(1561.5, 215, 303, GR), V(1561.5, 585, BTM, RD),
  V(649.5, 302, 629, DR),
  V(350.5, 583, BTM, DR), V(391.5, 581, BTM, RD), V(672.5, 550, BTM, RD), V(698.5, 617, BTM, RD), V(735.5, 549, BTM, DR),
  V(1098.5, 552, BTM, DR), V(1123.5, 617, BTM, RD), V(1152.5, 549, BTM, '#c80000'), V(1184.5, 453, BTM, DR),
  V(1430.5, 582, BTM, RD), V(1483.5, 584, BTM, DR), V(1527.5, 607, BTM, '#c80000'),
  H(346.5, 301, W, RD), H(382.5, 301, W, DR), H(390.5, 301, W, RD), H(423.5, 301, W, RD),
  H(449.5, 301, W, DR), H(461.5, 639, 1192, DR), H(496.5, 639, 1192, DR), H(508.5, 301, W, RD), H(531.5, 301, W, RD),
  H(557.5, 641, 1192, DR), H(592.5, 301, W, DR), H(613.5, 301, W, RD), H(622.5, 641, 1196, DR), H(733.5, 301, W, RD),
  H(496.5, 1192, 1326, GR), H(622.5, 1196, 1241, GR), V(1222.5, 480, 496, GR),
];
const tickXs = [324, 417.5, 496.5, 584.5, 672.5, 676.5, 748.5, 824.5, 912.5, 1000.5, 1076.5, 1152.5, 1157.5, 1237.5, 1325.5, 1404.5, 1498.5, 1561.5];
const bubbles: [string, number, number][] = [
  ['7', 324, 202], ['9', 418, 202], ['10', 497, 202], ['11', 585, 202], ['12', 673, 202], ['12', 677, 223], ['14', 749, 202], ['15', 824, 202], ['16', 912, 202],
  ['17', 1000, 202], ['18', 1076, 202], ['20', 1153, 202], ['20', 1157, 223], ['21', 1237, 202], ['22', 1325, 202], ['23', 1404, 202], ['25', 1498, 202], ['27', 1550, 202],
  ['J', 314, 346], ['G', 314, 382], ['G', 314, 390], ['F', 314, 423], ['E', 314, 508], ['D', 314, 531], ['C', 314, 613], ['B', 314, 733],
  ['J', 1550, 346], ['G', 1550, 382], ['G', 1550, 390], ['F', 1550, 423], ['E', 1550, 508], ['D', 1550, 531], ['C', 1550, 613], ['B', 1550, 733],
  ['E', 1338, 496], ['C', 1253, 622],
  ['8', 391, 737], ['10', 497, 737], ['11', 585, 737], ['13', 699, 737], ['15', 824, 737], ['16', 912, 737], ['17', 1000, 737], ['19', 1123, 737], ['21', 1237, 737], ['22', 1325, 737], ['24', 1431, 737], ['26', 1527, 737],
];
const dims: [string, number][] = [['2150', 294], ['3200', 375], ['2700', 462], ['3000', 545], ['3000', 633], ['2600', 715], ['2600', 791], ['3000', 873], ['3000', 961], ['2600', 1043], ['2600', 1119], ['2900', 1200], ['3000', 1286], ['2700', 1370], ['3200', 1456], ['2150', 1535]];
const poly = (cx: number, cy: number) => Array.from({ length: 10 }, (_, i) => {
  const a = (i * Math.PI) / 5 - Math.PI / 2;
  return `${(cx + 12.5 * Math.cos(a)).toFixed(1)},${(cy + 13 * Math.sin(a)).toFixed(1)}`;
}).join(' ');

const Drawing = () => (
  <Canvas viewBox="301 109 1262 639">
    {lines.map(([a, b, c, d, s], i) => <line key={i} x1={a} y1={b} x2={c} y2={d} stroke={s} strokeWidth="1" />)}
    {tickXs.map(x => <path key={x} d={`M${x - 6} 309L${x + 6} 297`} stroke={GR} strokeWidth=".9" />)}
    <path d="M1218.500 491.500L1228.500 502.500" stroke={GR} strokeWidth=".9" />
    {bubbles.map(([t, x, y], i) => (
      <g key={i}>
        <polygon points={poly(x, y)} fill="none" stroke={GR} strokeWidth=".9" />
        <text x={x + 1.5} y={y + 6} fontSize="17" textAnchor="middle">{t}</text>
      </g>
    ))}
    {dims.map(([t, x], i) => <text key={i} x={x} y={294} fontSize="17" textAnchor="middle">{t}</text>)}
    <text x={919} y={250} fontSize="17" textAnchor="middle">63550</text>
    <text transform="translate(1228 473) rotate(-90)" fontSize="17" textAnchor="middle">1200</text>
    <path d="M356 702V662" stroke="#00e600" strokeWidth="4" />
    <path d="M352 664L356 652L360 664Z" fill="#00e600" />
    <path d="M356 700.500H394" stroke={RD} strokeWidth="3.500" />
    <path d="M392 696L405 700.500L392 705Z" fill={RD} />
    <text x={369.500} y={664} fontSize="12" textAnchor="middle" style={{ fill: '#00c800' }}>Y</text>
    <text x={397} y={690} fontSize="12" textAnchor="middle" style={{ fill: '#e00000' }}>X</text>
  </Canvas>
);

const Strokes = () => (
  <Overlay viewBox="0 0 1563 748">
    <g fill="none" stroke="#f00000" strokeWidth="2.2" strokeLinecap="round" strokeLinejoin="round">
      <path d="M225 383C232 383 233 381 235 377C237 371 239 367 245 366.500C255 366.500 270 361 300 353C310 351 318 348 324 346.700C335 344 345 339 354 336.700C362 334.500 368 332 376 331.700C395 331.500 410 332 420 331.700C435 331.500 445 331 455 329C470 325 485 319 497 316C510 312 520 309 529 307.700C540 305 548 304 557 304C575 305 590 307 601 306.700C612 306.500 622 306 629 304C640 300 648 295 653.500 292.700C658 290.500 670 290 681 288.500" />
      <path d="M656 279.300C663 280 670 280 673.600 281.700C678 283.500 681 285 681.700 288C681 291 677 294 673.600 296.700C668 299 662 301 656.800 302" />
      <path d="M642 142.300C645 144.500 649 146 653.500 146.700C662 148 672 148 681.700 148.300C715 148 750 146 782 146C795 146 810 146.500 822 147.300C850 149.500 880 152 902.600 153.300C925 154.500 950 155 970 155C985 155 998 154.500 1010.700 153.300C1028 151 1044 148 1059 147.700C1070 147 1080 147 1091.500 147.300C1115 148 1135 148.500 1152 149.300C1160 150 1167 151 1172 152.700C1174 155 1174.500 158 1174.600 163.300C1175 172 1175 182 1175.500 190C1177 198 1180 205 1182.300 213.300C1183 220 1183 227 1182.300 233.300C1180 242 1176 250 1172 258" />
      <path d="M1167 250C1168 255 1170 259 1172 263C1174 268 1176 272 1179 276C1182 271 1185 266 1188 260C1190 256 1192 254 1192.400 250.700" />
    </g>
  </Overlay>
);

const meter = ['#262a33','#262a33','#262a33','#262a33','#262a33','#262a33','#262a33','#262a33','#262a33','#e8e840','#d8e850','#b8e868','#a0e878','#88e890','#70e8a8','#60e0c0','#50d8d0'];

export default function App() {
  return (
    <Page>
      <Global />
      <Toolbars />
      <Main>
        <NavPanel />
        <SidePanel />
        <Workspace>
          <WorkTools />
          <Drawing />
        </Workspace>
      </Main>
      <Meter>{meter.map((c, i) => <MeterTick key={i} $c={c} />)}</Meter>
      <Strokes />
    </Page>
  );
}
